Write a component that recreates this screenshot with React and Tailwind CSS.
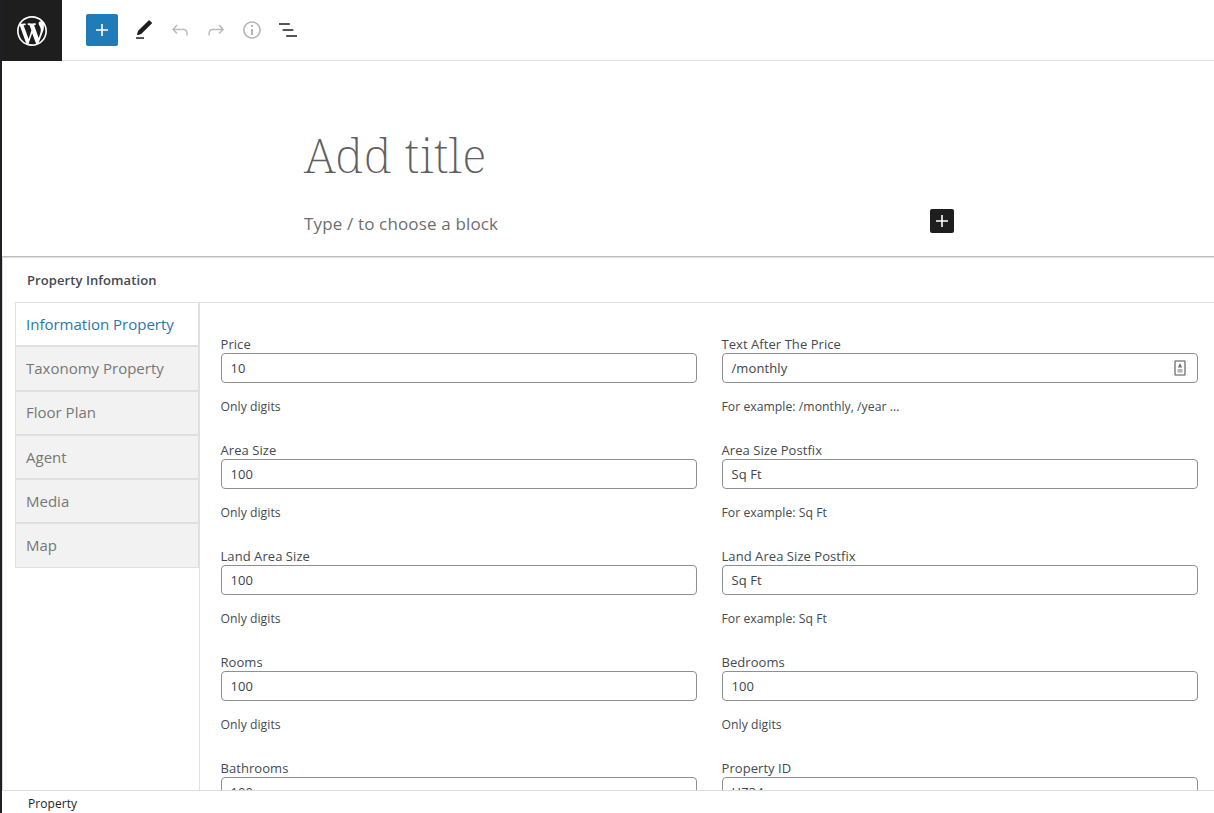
import React from 'react';

const TABS = ['Information Property', 'Taxonomy Property', 'Floor Plan', 'Agent', 'Media', 'Map'];

const FIELDS = [
  { label: 'Price', value: '10', hint: 'Only digits' },
  { label: 'Text After The Price', value: '/monthly', hint: 'For example: /monthly, /year ...', autofill: true },
  { label: 'Area Size', value: '100', hint: 'Only digits' },
  { label: 'Area Size Postfix', value: 'Sq Ft', hint: 'For example: Sq Ft' },
  { label: 'Land Area Size', value: '100', hint: 'Only digits' },
  { label: 'Land Area Size Postfix', value: 'Sq Ft', hint: 'For example: Sq Ft' },
  { label: 'Rooms', value: '100', hint: 'Only digits' },
  { label: 'Bedrooms', value: '100', hint: 'Only digits' },
  { label: 'Bathrooms', value: '100' },
  { label: 'Property ID', value: 'HZ34' },
];

const ICONS = {
  plus: 'M18 11.2h-5.2V6h-1.6v5.2H6v1.6h5.2V18h1.6v-5.2H18z',
  undo: 'M18.3 11.7c-.6-.6-1.4-.9-2.3-.9H6.7l2.9-3.3-1.1-1-4.5 5L8.5 16l1-1-2.7-2.7H16c.5 0 .9.2 1.3.5 1 1 1 3.4 1 4.5v.3h1.5v-.2c0-1.5 0-4.3-1.5-5.7z',
  redo: 'M15.6 6.5l-1.1 1 2.9 3.3H8c-.9 0-1.7.3-2.3.9-1.4 1.5-1.4 4.2-1.4 5.6v.2h1.5v-.3c0-1.1 0-3.5 1-4.5.3-.3.7-.5 1.3-.5h9.2L14.5 15l1.1 1.1 4.6-4.6-4.6-5z',
  info: 'M12 3.2c-4.8 0-8.8 3.9-8.8 8.8 0 4.8 3.9 8.8 8.8 8.8 4.8 0 8.8-3.9 8.8-8.8 0-4.8-4-8.8-8.8-8.8zm0 16c-4 0-7.2-3.3-7.2-7.2C4.8 8 8 4.8 12 4.8s7.2 3.3 7.2 7.2c0 4-3.2 7.2-7.2 7.2zM11 17h2v-6h-2v6zm0-8h2V7h-2v2z',
  list: 'M13.8 5.2H3v1.5h10.8V5.2zm-3.6 12v1.5H21v-1.5H10.2zm7.2-6H6.6v1.5h10.8v-1.5z',
};

function Icon({ name, className }) {
  return (
    <svg viewBox="0 0 24 24" fill="currentColor" className={className}>
      <path d={ICONS[name]} />
    </svg>
  );
}

function PencilIcon() {
  return (
    <svg viewBox="0 0 24 24" fill="currentColor" className="size-6 text-[#1e1e1e]">
      <path
        d="M19.3 5 17.1 2.9 6.9 13.1 5.7 16.4 9 15.3z"
        stroke="currentColor"
        strokeWidth="1.4"
        strokeLinejoin="round"
      />
      <path d="M4 20.8h8v-1.5H4z" />
    </svg>
  );
}

function WordPressLogo() {
  return (
    <svg viewBox="0 0 20 20" fill="currentColor" className="size-[30px] text-white">
      <path d="M20 10c0-5.51-4.49-10-10-10C4.48 0 0 4.49 0 10c0 5.52 4.48 10 10 10 5.51 0 10-4.48 10-10zM7.78 15.37L4.37 6.22c.55-.02 1.17-.08 1.17-.08.5-.06.44-1.13-.06-1.11 0 0-1.45.11-2.37.11-.18 0-.37 0-.58-.01C4.12 2.69 6.87 1.11 10 1.11c2.33 0 4.45.87 6.05 2.34-.68-.11-1.65.39-1.65 1.58 0 .74.45 1.36.9 2.1.35.61.55 1.36.55 2.46 0 1.49-1.4 5-1.4 5l-3.03-8.37c.54-.02.82-.17.82-.17.5-.05.44-1.25-.06-1.22 0 0-1.44.12-2.38.12-.87 0-2.33-.12-2.33-.12-.5-.03-.56 1.2-.06 1.22l.92.08 1.26 3.41zM17.41 10c.24-.64.74-1.87.43-4.25.7 1.29 1.05 2.71 1.05 4.25 0 3.29-1.73 6.24-4.4 7.78.97-2.59 1.94-5.2 2.92-7.78zM6.1 18.09C3.12 16.65 1.11 13.53 1.11 10c0-1.3.23-2.48.72-3.59C3.25 10.3 4.67 14.2 6.1 18.09zm4.03-6.63l2.58 6.98c-.86.29-1.76.45-2.71.45-.79 0-1.57-.11-2.29-.33.81-2.38 1.62-4.74 2.42-7.1z" />
    </svg>
  );
}

function AutofillIcon() {
  return (
    <svg viewBox="0 0 12 16" className="h-4 w-3">
      <rect x="1" y="1" width="10" height="14" rx="0.5" fill="#fff" stroke="#8a8a8a" strokeWidth="1.6" />
      <path d="M6 3.2 7 5l1 2.6H4L5 5z" fill="#6f6f6f" />
      <rect x="3.5" y="9" width="5" height="3.6" fill="#b4b4b4" />
    </svg>
  );
}

function Toolbar() {
  return (
    <header className="flex h-[61px] shrink-0 items-start border-b border-[#e0e0e0]">
      <div className="flex h-[61px] w-[60px] shrink-0 items-center justify-center bg-[#1e1e1e]">
        <WordPressLogo />
      </div>
      <div className="flex h-[60px] items-center pl-6">
        <button className="flex size-8 items-center justify-center rounded-[2px] bg-[#1f7cb8] text-white">
          <Icon name="plus" className="size-6" />
        </button>
        <div className="flex gap-3 pl-[14px] text-[#bbb]">
          <PencilIcon />
          <Icon name="undo" className="size-6" />
          <Icon name="redo" className="size-6" />
          <Icon name="info" className="size-6 text-[#b5b5b5]" />
          <Icon name="list" className="size-6 text-[#1e1e1e]" />
        </div>
      </div>
    </header>
  );
}

function Field({ label, value, hint, autofill }) {
  return (
    <div className="flex h-[106px] flex-col">
      <label className="-ml-[0.5px] h-[18px] text-[13px] leading-[18px] tracking-[0.06px] whitespace-nowrap">{label}</label>
      <div className="flex h-[30px] items-center justify-between rounded border border-[#8c8f94] bg-white pr-[11px] pl-[8.5px] text-[13px] tracking-[0.1px] text-[#3c434a]">
        <span className="pt-px">{value}</span>
        {autofill && <AutofillIcon />}
      </div>
      {hint && (
        <p className="-ml-[0.5px] mt-[14px] text-[12.2px] leading-5 tracking-[0.04px] whitespace-nowrap">{hint}</p>
      )}
    </div>
  );
}

export default function App() {
  return (
    <div className="flex h-[813px] w-[1214px] flex-col overflow-hidden border-l-2 border-[#1f1e24] bg-white font-['Open_Sans',sans-serif] text-[#434a50]">
      <Toolbar />

      <section className="flex h-[195px] shrink-0 flex-col pl-[302px]">
        <h1 className="mt-[58px] h-[72px] font-['Noto_Serif',serif] text-[48px] leading-[72px] font-extralight tracking-[0.5px] text-[#606060]">
          Add title
        </h1>
        <div className="mt-[18px] flex w-[650px] items-start justify-between">
          <p className="pt-[3px] text-[17px] leading-6 tracking-[0.15px] text-[#6e6e6e]">Type / to choose a block</p>
          <button className="flex size-6 items-center justify-center rounded-[2px] bg-[#1e1e1e] text-white">
            <Icon name="plus" className="size-6" />
          </button>
        </div>
      </section>

      <section className="flex min-h-0 flex-1 flex-col border-t border-l border-t-[#bdbdbd] border-l-[#d8d8d8]">
        <div className="flex h-[45px] shrink-0 items-center border-t border-[#dedede] pt-[2px] pl-6">
          <h2 className="text-[13px] font-semibold tracking-[0.08px]">Property Infomation</h2>
        </div>
        <div className="ml-3 flex min-h-0 flex-1 overflow-hidden border-t border-[#e0e0e0]">
          <nav className="-mt-px flex w-[184px] shrink-0 flex-col">
            {TABS.map((tab, i) => (
              <a
                key={tab}
                className={
                  i === 0
                    ? 'flex h-[44.3px] items-center border border-[#e0e0e0] bg-white pl-[10px] text-[15px] text-[#2a78ab]'
                    : 'flex h-[44.3px] items-center border border-[#e0e0e0] bg-[#f2f2f2] pl-[10px] text-[15px] text-[#777]'
                }
              >
                {tab}
              </a>
            ))}
          </nav>
          <div className="grid flex-1 auto-rows-[106px] grid-cols-[476px_476px] gap-x-[25px] border-l border-[#e0e0e0] pt-8 pl-[21px]">
            {FIELDS.map((f) => (
              <Field key={f.label} {...f} />
            ))}
          </div>
        </div>
      </section>

      <footer className="flex h-[23px] shrink-0 items-center border-t border-[#dcdcdc] bg-white pt-[3px] pl-[26px] text-[12px] tracking-[0.05px] text-[#1e1e1e]">
        Property
      </footer>
    </div>
  );
}
